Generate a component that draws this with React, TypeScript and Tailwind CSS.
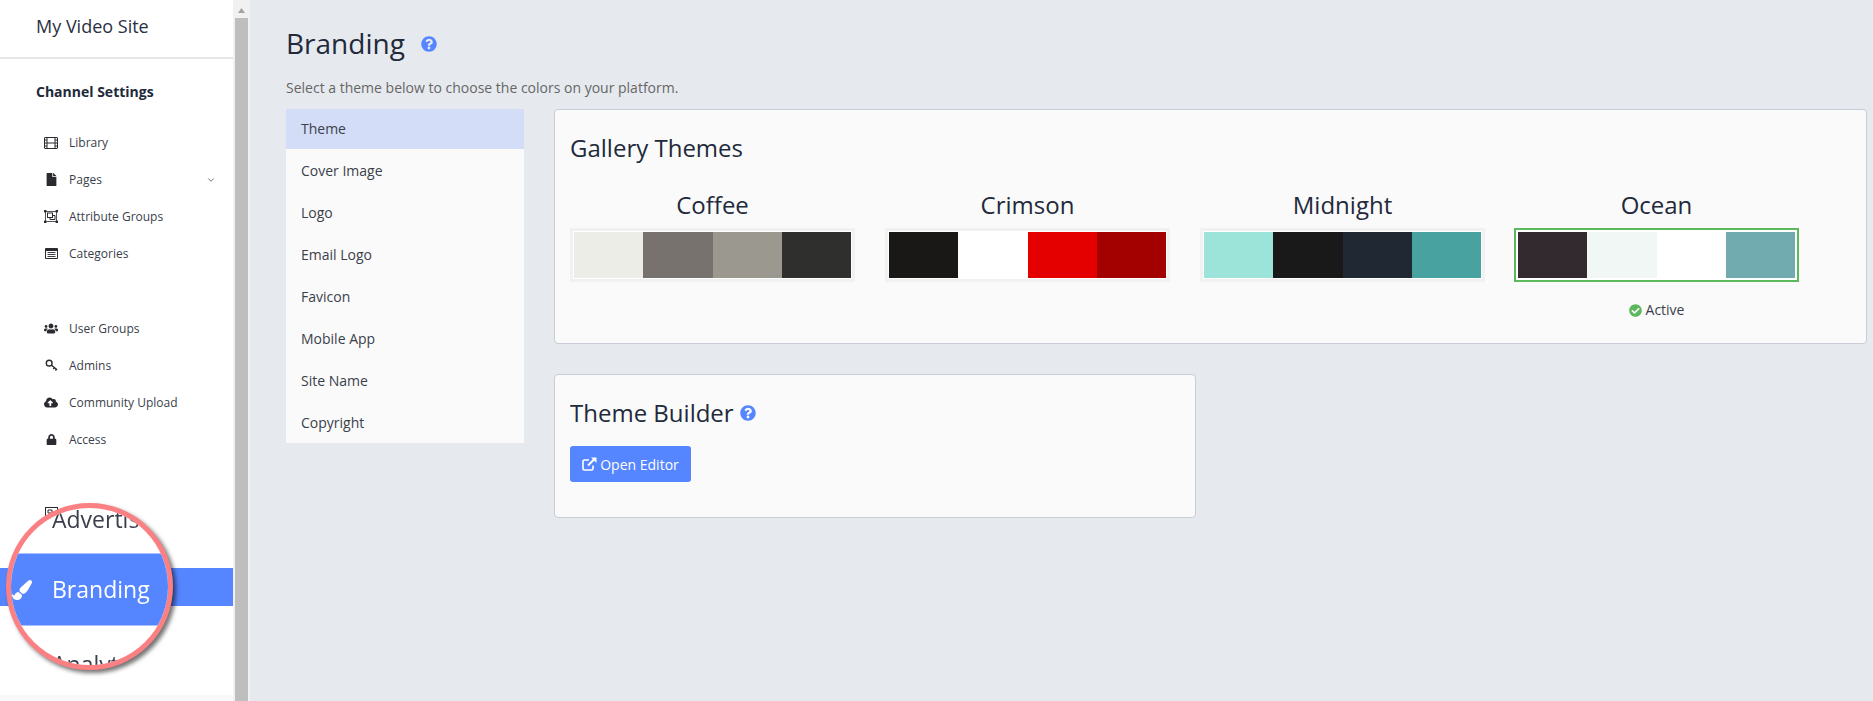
import { ChevronDown } from 'lucide-react'
import type { ReactNode } from 'react'
import {
  FaCheckCircle,
  FaCloudUploadAlt,
  FaFile,
  FaLock,
  FaPaintBrush,
  FaQuestionCircle,
  FaUsers,
} from 'react-icons/fa'

const ink = '#2a2a30'

const FilmIcon = () => (
  <svg width="14" height="12" viewBox="0 0 14 12" fill="none" stroke={ink} strokeWidth="1">
    <rect x="0.5" y="0.5" width="13" height="11" rx="0.5" />
    <path d="M3 .5v11M11 .5v11M3 6h8M.5 3h2.5M.5 6h2.5M.5 9h2.5M11 3h2.5M11 6h2.5M11 9h2.5" />
  </svg>
)

const GroupIcon = () => (
  <svg width="14" height="13" viewBox="0 0 14 13" fill="none" stroke={ink} strokeWidth="1">
    <path d="M1.5 2v9M12.5 2v9M2 1.5h10M2 11.5h10" strokeWidth="0.8" />
    <rect x="0" y="0" width="2.4" height="2.4" fill={ink} stroke="none" />
    <rect x="11.6" y="0" width="2.4" height="2.4" fill={ink} stroke="none" />
    <rect x="0" y="10.6" width="2.4" height="2.4" fill={ink} stroke="none" />
    <rect x="11.6" y="10.6" width="2.4" height="2.4" fill={ink} stroke="none" />
    <rect x="3.5" y="3" width="5" height="4.5" />
    <path d="M8.5 5.5h2.5v4h-5V7.5" />
  </svg>
)

const CategoriesIcon = () => (
  <svg width="13" height="11" viewBox="0 0 13 11">
    <rect x="0" y="0" width="13" height="11" rx="1" fill={ink} />
    <rect x="1" y="3" width="11" height="7" fill="#fff" />
    <path d="M2.5 4.5h8M2.5 6.5h8M2.5 8.5h8" stroke={ink} strokeWidth="0.9" />
  </svg>
)

const AdIcon = () => (
  <svg width="13" height="11" viewBox="0 0 13 11" fill="none" stroke={ink} strokeWidth="1">
    <rect x="0.5" y="0.5" width="12" height="10" />
    <path d="M3 3h4v3H3z" />
  </svg>
)

const KeyIcon = () => (
  <svg width="13" height="13" viewBox="0 0 14 14" fill="none" stroke={ink} strokeWidth="1.5">
    <circle cx="4.5" cy="4.5" r="3.1" />
    <path d="M7 6.8l6 4.7M10.2 9.3l-1.3 1.6M12.3 11l-1.1 1.4" />
  </svg>
)

const OpenIcon = () => (
  <svg width="15" height="14" viewBox="0 0 15 14" fill="none" stroke="#fff" strokeWidth="1.6">
    <path d="M11 8.500v3a1.500 1.500 0 0 1-1.500 1.500h-7A1.500 1.500 0 0 1 1 11.500v-7A1.500 1.500 0 0 1 2.500 3H7" />
    <path d="M6 8.500L13 1.500" strokeWidth="2" />
    <path d="M9 .5h5.500V6z" fill="#fff" stroke="none" />
  </svg>
)

function NavRow({ icon, label, chevron }: { icon: ReactNode; label: string; chevron?: boolean }) {
  return (
    <div className="flex h-[37px] items-center pl-[44px] pr-[17px] text-[12px] text-[#3a3f4b]">
      <span className="flex w-[14px] justify-center text-[13px] text-[#2a2a30]">{icon}</span>
      <span className="ml-[11px] flex-1">{label}</span>
      {chevron && <ChevronDown size={10} className="text-[#555]" />}
    </div>
  )
}

function Sidebar() {
  return (
    <aside className="relative flex w-[233px] shrink-0 flex-col bg-white">
      <div className="flex h-[59px] items-center border-b-2 border-[#e6e6e6] pb-[4px] pl-[36px] text-[18px] text-[#2a3042]">
        My Video Site
      </div>
      <div className="mt-[23px] pl-[36px] text-[14px] font-bold leading-[20px] text-[#22293a]">
        Channel Settings
      </div>
      <div className="mt-[22px]">
        <NavRow icon={<FilmIcon />} label="Library" />
        <NavRow icon={<FaFile />} label="Pages" chevron />
        <NavRow icon={<GroupIcon />} label="Attribute Groups" />
        <NavRow icon={<CategoriesIcon />} label="Categories" />
      </div>
      <div className="mt-[38px]">
        <NavRow icon={<FaUsers className="text-[15px]" />} label="User Groups" />
        <NavRow icon={<KeyIcon />} label="Admins" />
        <NavRow icon={<FaCloudUploadAlt className="text-[15px]" />} label="Community Upload" />
        <NavRow icon={<FaLock className="text-[11px]" />} label="Access" />
      </div>
      <div className="mt-[36px]">
        <NavRow icon={<AdIcon />} label="" />
      </div>
      <div className="mt-[37px] h-[38px] bg-[#5585ff]" />
      <div className="flex-1" />
      <div className="h-[6px] bg-[#f8f8f8]" />

      {/* magnifier callout over the Branding row */}
      <div className="absolute left-[6px] top-[503px] h-[167px] w-[167px] overflow-hidden rounded-full border-[5px] border-[#fb8083] bg-white shadow-[3px_3px_4px_rgba(0,0,0,0.55)]">
        <div className="h-[45px] pl-[41px] text-[23px] leading-[23px] text-[#3a3f4b] blur-[0.5px]">Advertis</div>
        <div className="flex h-[73px] items-center border-y border-[#a9c0fb] bg-[#5585ff] pl-[1px] text-[23px] text-white blur-[0.5px]">
          <FaPaintBrush className="text-[20px]" />
          <span className="ml-[20px]">Branding</span>
        </div>
        <div className="pl-[41px] pt-[26px] text-[23px] leading-[24px] text-[#3a3f4b] blur-[0.5px]">Analyt</div>
      </div>
    </aside>
  )
}

function Scrollbar() {
  return (
    <div className="flex w-[17px] shrink-0 flex-col items-center bg-[#f1f1f1]">
      <svg width="9" height="18" viewBox="0 0 9 18" className="shrink-0">
        <path d="M1 13l3.5-5L8 13z" fill="#a3a3a3" />
      </svg>
      <div className="w-[13px] flex-1 bg-[#bebebe]" />
    </div>
  )
}

const tabs = ['Theme', 'Cover Image', 'Logo', 'Email Logo', 'Favicon', 'Mobile App', 'Site Name', 'Copyright']

const themes = [
  { name: 'Coffee', colors: ['bg-[#ecede6]', 'bg-[#77726d]', 'bg-[#9b9890]', 'bg-[#2f2f2d]'] },
  { name: 'Crimson', colors: ['bg-[#1a1717]', 'bg-white', 'bg-[#e50000]', 'bg-[#a30000]'] },
  { name: 'Midnight', colors: ['bg-[#9ce3d9]', 'bg-[#181918]', 'bg-[#202834]', 'bg-[#48a3a0]'] },
  { name: 'Ocean', colors: ['bg-[#332a2f]', 'bg-[#f1f7f4]', 'bg-white', 'bg-[#72abaf]'], active: true },
]

function ThemeCard({ name, colors, active }: { name: string; colors: string[]; active?: boolean }) {
  return (
    <div className={active ? '-ml-px w-[285px]' : 'w-[285px]'}>
      <div className="mb-[8px] text-center text-[24px] leading-[30px] text-[#22293a]">{name}</div>
      <div
        className={
          active
            ? 'flex h-[54px] border-2 border-[#5cb85c] bg-white p-[2px]'
            : 'flex h-[54px] border-[3px] border-[#f1f1f1] bg-white p-px'
        }
      >
        {colors.map((c, i) => (
          <div key={i} className={`flex-1 ${c}`} />
        ))}
      </div>
      {active && (
        <div className="mt-[19px] flex items-center justify-center gap-[4px] text-[14px] leading-[18px] text-[#3a3f4b]">
          <FaCheckCircle className="text-[13px] text-[#5cb85c]" />
          Active
        </div>
      )}
    </div>
  )
}

export default function App() {
  return (
    <div className="flex h-[701px] w-[1873px] overflow-hidden bg-[#e6eaef] font-['Open_Sans',sans-serif]">
      <Sidebar />
      <Scrollbar />
      <main className="flex-1 pl-[36px] pr-[6px] pt-[24px]">
        <div className="flex items-center">
          <h1 className="text-[28px] leading-[38px] text-[#22293a]">Branding</h1>
          <FaQuestionCircle className="ml-[16px] mt-[2px] text-[16px] text-[#5585ff]" />
        </div>
        <p className="mb-[12px] mt-[17px] text-[14px] leading-[18px] text-[#666]">
          Select a theme below to choose the colors on your platform.
        </p>
        <div className="flex items-start gap-[30px]">
          <div className="w-[238px] shrink-0 bg-[#fafafa] text-[14px] text-[#3a3f4b]">
            {tabs.map((t, i) => (
              <div key={t} className={i === 0 ? 'flex h-[40px] items-center bg-[#d3ddf7] pb-[2px] pl-[15px]' : 'flex h-[42px] items-center pl-[15px]'}>
                {t}
              </div>
            ))}
          </div>
          <div className="flex-1">
            <section className="h-[235px] rounded border border-[#c8cdd6] bg-[#fafafa] px-[15px] pt-[23px]">
              <h2 className="text-[24px] leading-[30px] text-[#22293a]">Gallery Themes</h2>
              <div className="mt-[27px] flex gap-[30px]">
                {themes.map((t) => (
                  <ThemeCard key={t.name} name={t.name} colors={t.colors} active={t.active} />
                ))}
              </div>
            </section>
            <section className="mt-[30px] h-[144px] w-[642px] rounded border border-[#c8cdd6] bg-[#fafafa] px-[15px] pt-[23px]">
              <div className="flex items-center">
                <h2 className="text-[24px] leading-[30px] text-[#22293a]">Theme Builder</h2>
                <FaQuestionCircle className="ml-[6px] text-[16px] text-[#5585ff]" />
              </div>
              <button className="mt-[18px] flex h-[36px] w-[121px] items-center justify-center gap-[3px] rounded-[3px] bg-[#5585ff] text-[14px] text-white">
                <OpenIcon />
                Open Editor
              </button>
            </section>
          </div>
        </div>
      </main>
    </div>
  )
}
